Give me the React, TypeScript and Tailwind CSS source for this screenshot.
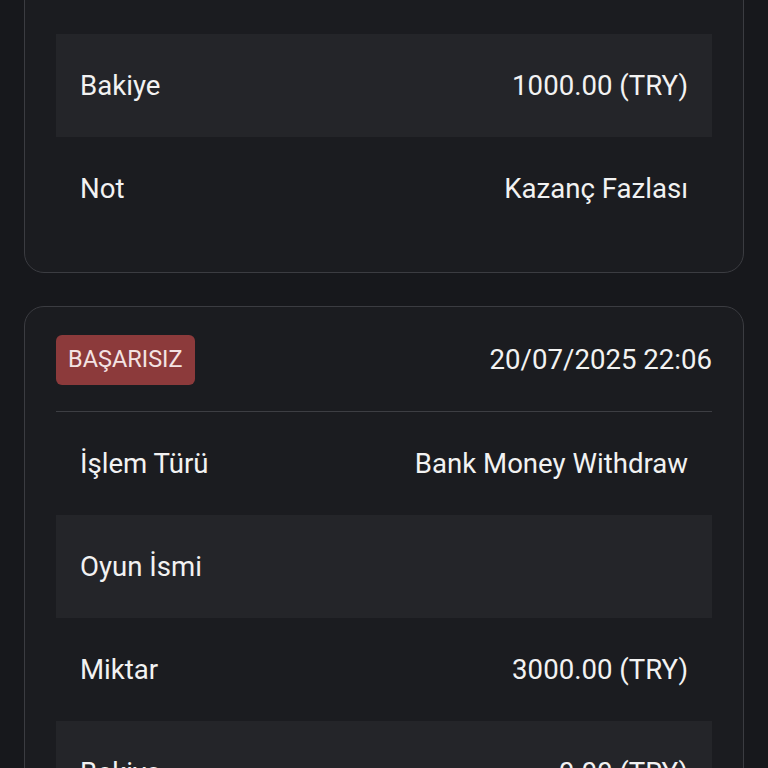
import React from 'react';

type Row = { label: string; value: string };

const CARDS: { status: string; date: string; rows: Row[] }[] = [
  {
    status: "BAŞARISIZ",
    date: "20/07/2025 21:48",
    rows: [
      { label: "İşlem Türü", value: "Bank Money Withdraw" },
      { label: "Oyun İsmi", value: "" },
      { label: "Miktar", value: "1000.00 (TRY)" },
      { label: "Bakiye", value: "1000.00 (TRY)" },
      { label: "Not", value: "Kazanç Fazlası" },
    ],
  },
  {
    status: "BAŞARISIZ",
    date: "20/07/2025 22:06",
    rows: [
      { label: "İşlem Türü", value: "Bank Money Withdraw" },
      { label: "Oyun İsmi", value: "" },
      { label: "Miktar", value: "3000.00 (TRY)" },
      { label: "Bakiye", value: "0.00 (TRY)" },
      { label: "Not", value: "" },
    ],
  },
];

function Card({ status, date, rows }: { status: string; date: string; rows: Row[] }) {
  return (
    <div className="rounded-[20px] border border-[#3b3c41] bg-[#1b1c20] px-[31px] pt-[28px] pb-[32px]">
      <div className="flex h-[50px] items-center justify-between">
        <span className="flex h-[50px] items-center rounded-[6px] bg-[#8c3a3b] px-[12px] text-[23.5px] text-[#f3e3e3]">
          {status}
        </span>
        <span className="text-[27.6px] text-[#f2f2f2]">{date}</span>
      </div>
      <div className="mt-[26px] h-px bg-[#3d3e43]" />
      {rows.map((r, i) => (
        <div
          key={r.label}
          className={
            "flex h-[103px] items-center justify-between px-[24px] text-[27.6px] text-[#f2f2f2] " +
            (i % 2 === 1 ? "bg-[#242529]" : "")
          }
        >
          <span>{r.label}</span>
          <span>{r.value}</span>
        </div>
      ))}
    </div>
  );
}

export default function App() {
  return (
    <div
      className="h-[768px] overflow-hidden bg-[#17181c]"
      style={{ fontFamily: 'Roboto, "Noto Sans", sans-serif' }}
    >
      <div className="-mt-[381px] flex flex-col gap-[33px] px-[24px]">
        {CARDS.map((c, i) => (
          <Card key={i} {...c} />
        ))}
      </div>
    </div>
  );
}
